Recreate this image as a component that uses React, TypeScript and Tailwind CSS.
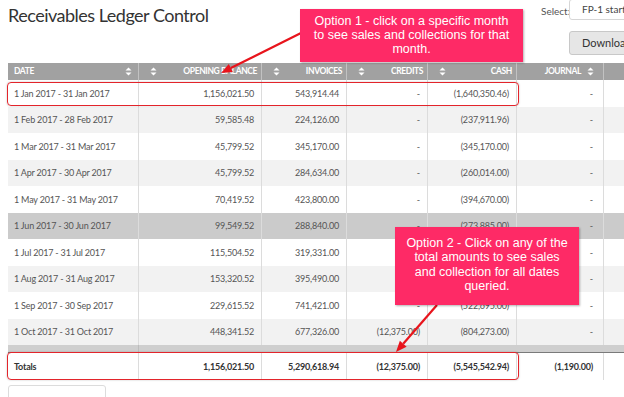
import React from "react";

const COLS = [131, 123, 85, 81, 89, 87, 80];

type Row = { d: string; v: string[]; bg: string };

const rows: Row[] = [
  { d: "1 Jan 2017 - 31 Jan 2017", v: ["1,156,021.50", "543,914.44", "-", "(1,640,350.46)", "-"], bg: "bg-white" },
  { d: "1 Feb 2017 - 28 Feb 2017", v: ["59,585.48", "224,126.00", "-", "(237,911.96)", "-"], bg: "bg-[#f2f2f2]" },
  { d: "1 Mar 2017 - 31 Mar 2017", v: ["45,799.52", "345,170.00", "-", "(345,170.00)", "-"], bg: "bg-white" },
  { d: "1 Apr 2017 - 30 Apr 2017", v: ["45,799.52", "284,634.00", "-", "(260,014.00)", "-"], bg: "bg-[#f2f2f2]" },
  { d: "1 May 2017 - 31 May 2017", v: ["70,419.52", "423,800.00", "-", "(394,670.00)", "-"], bg: "bg-white" },
  { d: "1 Jun 2017 - 30 Jun 2017", v: ["99,549.52", "288,840.00", "-", "(273,885.00)", "-"], bg: "bg-[#cbcbcb]" },
  { d: "1 Jul 2017 - 31 Jul 2017", v: ["115,504.52", "319,331.00", "-", "(281,376.00)", "-"], bg: "bg-white" },
  { d: "1 Aug 2017 - 31 Aug 2017", v: ["153,320.52", "395,490.00", "-", "(319,195.00)", "-"], bg: "bg-[#f2f2f2]" },
  { d: "1 Sep 2017 - 30 Sep 2017", v: ["229,615.52", "741,421.00", "-", "(522,695.00)", "-"], bg: "bg-white" },
  { d: "1 Oct 2017 - 31 Oct 2017", v: ["448,341.52", "677,326.00", "(12,375.00)", "(804,273.00)", "-"], bg: "bg-[#f2f2f2]" },
];

const totals = ["1,156,021.50", "5,290,618.94", "(12,375.00)", "(5,545,542.94)", "(1,190.00)"];

function SortIcon() {
  return (
    <svg width="7" height="9" viewBox="0 0 7 9" className="shrink-0">
      <path d="M3.5 0.5 L6.5 3.6 L0.5 3.6 Z" fill="white" />
      <path d="M3.5 8.5 L6.5 5.4 L0.5 5.4 Z" fill="white" />
    </svg>
  );
}

function Arrow({ x1, y1, x2, y2 }: { x1: number; y1: number; x2: number; y2: number }) {
  const ang = Math.atan2(y2 - y1, x2 - x1);
  const len = 11;
  const w = 4.5;
  const bx = x2 - len * Math.cos(ang);
  const by = y2 - len * Math.sin(ang);
  const px = -Math.sin(ang) * w;
  const py = Math.cos(ang) * w;
  return (
    <g>
      <line x1={x1} y1={y1} x2={bx} y2={by} stroke="#e8141c" strokeWidth="2.2" />
      <polygon points={`${x2},${y2} ${bx + px},${by + py} ${bx - px},${by - py}`} fill="#e8141c" />
    </g>
  );
}

export default function App() {
  return (
    <div
      className="relative w-[624px] h-[397px] overflow-hidden bg-white text-[#555]"
      style={{ fontFamily: "Lato, 'Noto Sans', sans-serif" }}
    >
      {/* top area */}
      <div className="flex h-[63px] pl-[8px]">
        <h1 className="pt-[3px] text-[18px] leading-[24px] font-normal text-[#333] tracking-[-0.5px]">
          Receivables Ledger Control
        </h1>
        <div className="ml-auto w-[83px] shrink-0 flex flex-col">
          <div className="flex items-start">
            <span className="mt-[4px] text-[10px] text-[#555] w-[28px] shrink-0">Select:</span>
            <div className="shrink-0 w-[90px] h-[21px] -mt-[1px] border border-[#d6d6d6] rounded-[3px] pl-[12px] text-[10px] leading-[19px] text-[#444]">
              FP-1 start
            </div>
          </div>
          <div className="ml-[28px] mt-[11px] shrink-0 w-[90px] h-[24px] bg-[#e6e6e6] border border-[#c8c8c8] rounded-[3px] pl-[12px] text-[11px] leading-[22px] text-[#333]">
            Download
          </div>
        </div>
      </div>

      {/* table */}
      <div className="ml-[8px] w-[676px] text-[9px] tracking-[-0.2px]">
        {/* header */}
        <div className="flex h-[17px] bg-[#a1a1a1] text-white font-bold uppercase text-[8.5px] tracking-[-0.4px]">
          <div style={{ width: COLS[0] }} className="flex items-center justify-between pl-[6px] pr-[6px] border-r border-[#c2c2c2]">
            <span>Date</span>
            <SortIcon />
          </div>
          {["Opening Balance", "Invoices", "Credits", "Cash"].map((h, i) => (
            <div
              key={h}
              style={{ width: COLS[i + 1] }}
              className="flex items-center justify-between pl-[11px] pr-[4px] border-r border-[#c2c2c2]"
            >
              <SortIcon />
              <span>{h}</span>
            </div>
          ))}
          <div style={{ width: COLS[5] }} className="flex items-center justify-end gap-[6px] pr-[9px] border-r border-[#c2c2c2]">
            <span>Journal</span>
            <SortIcon />
          </div>
          <div style={{ width: COLS[6] }} />
        </div>

        {/* body */}
        {rows.map((r) => (
          <div key={r.d} className={`flex h-[26.5px] items-center ${r.bg}`}>
            <div style={{ width: COLS[0] }} className="h-full flex items-center pl-[6px] border-r border-[#dcdcdc]">
              {r.d}
            </div>
            {r.v.map((v, i) => (
              <div
                key={i}
                style={{ width: COLS[i + 1] }}
                className={`h-full flex items-center justify-end border-r border-[#dcdcdc] ${i === 4 ? "pr-[10px]" : "pr-[7px]"}`}
              >
                {v}
              </div>
            ))}
            <div style={{ width: COLS[6] }} className="h-full" />
          </div>
        ))}

        {/* scroll band */}
        <div className="flex h-[7px] bg-[#cfcfcf]">
          <div style={{ width: COLS[0] }} className="border-r border-[#bdbdbd]" />
        </div>
        <div className="h-[1px] bg-[#7a7a7a]" />

        {/* totals */}
        <div className="flex h-[27px] items-center font-bold text-[#333]">
          <div style={{ width: COLS[0] }} className="h-full flex items-center pl-[6px] border-r border-[#dcdcdc]">
            Totals
          </div>
          {totals.map((v, i) => (
            <div
              key={i}
              style={{ width: COLS[i + 1] }}
              className={`h-full flex items-center justify-end border-r border-[#dcdcdc] ${i === 4 ? "pr-[10px]" : "pr-[7px]"}`}
            >
              {v}
            </div>
          ))}
        </div>

        {/* bottom control */}
        <div className="mt-[5px] w-[98px] h-[20px] border border-[#dcdcdc] rounded-[3px] pl-[10px] pt-[8px] text-[10px] leading-[12px] text-[#444]">
          10
        </div>
      </div>

      {/* highlight boxes */}
      <div className="absolute left-[7px] top-[82px] w-[512px] h-[24px] border-[1.5px] border-[#e3242b] rounded-[4px] shadow-[0_0_2px_rgba(0,0,0,0.25)]" />
      <div className="absolute left-[7px] top-[352px] w-[512px] h-[28px] border-[1.5px] border-[#e3242b] rounded-[4px] shadow-[0_0_2px_rgba(0,0,0,0.25)]" />

      {/* arrows */}
      <svg className="absolute left-0 top-0" width="624" height="397" viewBox="0 0 624 397">
        <Arrow x1={301} y1={33} x2={221} y2={73} />
        <Arrow x1={437} y1={305} x2={396} y2={352} />
      </svg>

      {/* callout 1 */}
      <div
        className="absolute left-[300px] top-[9px] w-[223px] h-[53px] bg-[#fe2a66] text-white text-center text-[12.5px] leading-[14px] pt-[5px] shadow-[1px_1px_2px_rgba(0,0,0,0.3)]"
        style={{ fontFamily: "'Liberation Sans', Arial, sans-serif" }}
      >
        Option 1 - click on a specific month
        <br />
        to see sales and collections for that
        <br />
        month.
      </div>

      {/* callout 2 */}
      <div
        className="absolute left-[395px] top-[227px] w-[184px] h-[78px] bg-[#fe2a66] text-white text-center text-[12.5px] leading-[14.3px] pt-[9px] shadow-[1px_1px_2px_rgba(0,0,0,0.3)]"
        style={{ fontFamily: "'Liberation Sans', Arial, sans-serif" }}
      >
        Option 2 - Click on any of the
        <br />
        total amounts to see sales
        <br />
        and collection for all dates
        <br />
        queried.
      </div>
    </div>
  );
}
